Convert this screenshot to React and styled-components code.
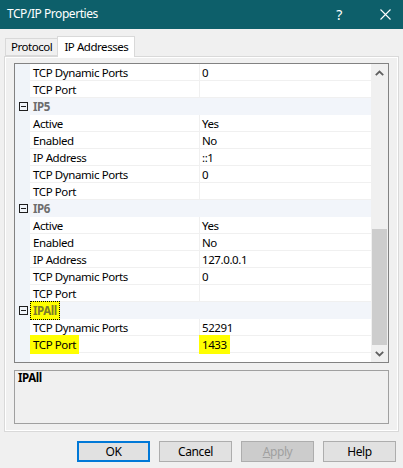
import React from 'react';
import styled, { createGlobalStyle } from 'styled-components';

const Global = createGlobalStyle`
  html, body {
    margin: 0;
    padding: 0;
    background: #f0f0f0;
  }
  body {
    font-family: "Segoe UI", "Noto Sans", "Liberation Sans", sans-serif;
    font-size: 11.5px;
    letter-spacing: -0.4px;
    color: #000;
  }
`;

const Window = styled.div`
  width: 403px;
  height: 468px;
  display: flex;
  flex-direction: column;
  background: #f0f0f0;
  overflow: hidden;
`;

const TitleBar = styled.div`
  height: 29px;
  background: #0d5f6a;
  display: flex;
  align-items: center;
  padding-left: 7px;
  color: #fff;
`;

const Title = styled.div`
  flex: 1;
  font-size: 12px;
  letter-spacing: -0.45px;
  margin-top: -2px;
`;

const TitleButton = styled.div`
  width: ${p => p.w}px;
  height: 29px;
  display: flex;
  align-items: center;
  justify-content: center;
  font-size: 14px;
`;

const Body = styled.div`
  padding: 7px 4px 0 4px;
  display: flex;
  flex-direction: column;
`;

const TabStrip = styled.div`
  display: flex;
  align-items: flex-end;
  height: 20px;
  padding-left: 1px;
`;

const Tab = styled.div`
  height: ${p => (p.active ? '20px' : '16px')};
  padding: ${p => (p.active ? '0 6px' : '0 5px')};
  margin-left: ${p => (p.active ? '-1px' : '0')};
  margin-bottom: ${p => (p.active ? '-1px' : '0')};
  border: 1px solid #d9d9d9;
  border-bottom: ${p => (p.active ? 'none' : '1px solid #d9d9d9')};
  background: ${p => (p.active ? '#ffffff' : '#f0f0f0')};
  display: flex;
  align-items: center;
  position: relative;
  z-index: ${p => (p.active ? 2 : 1)};
  line-height: 1;
  font-size: 11.5px;
  letter-spacing: -0.45px;
`;

const Panel = styled.div`
  border: 1px solid #d9d9d9;
  box-shadow: inset 0 0 0 1px #ffffff;
  background: #f0f0f0;
  height: 376px;
  box-sizing: border-box;
  padding: 6px 9px 0 9px;
  display: flex;
  flex-direction: column;
  gap: 7px;
`;

const Grid = styled.div`
  height: 300px;
  box-sizing: border-box;
  border: 1px solid #828282;
  background: #fff;
  display: flex;
`;

const Rows = styled.div`
  flex: 1;
  display: flex;
  flex-direction: column;
  background: linear-gradient(to right, #f0f4f9 15px, #ffffff 15px);
`;

const Row = styled.div`
  height: 17px;
  display: flex;
  flex-shrink: 0;
`;

const Gutter = styled.div`
  width: 15px;
  flex-shrink: 0;
  display: flex;
  align-items: center;
  justify-content: center;
`;

const Toggle = styled.div`
  width: 9px;
  height: 9px;
  box-sizing: border-box;
  border: 1px solid #1e1e1e;
  display: flex;
  align-items: center;
  justify-content: center;
  margin-left: 1px;
  &::after {
    content: '';
    width: 5px;
    height: 1px;
    background: #1e1e1e;
  }
`;

const NameCell = styled.div`
  width: 170px;
  flex-shrink: 0;
  box-sizing: border-box;
  border-bottom: 1px solid #f0f0f0;
  border-right: 1px solid #f0f0f0;
  padding-left: 3px;
  display: flex;
  align-items: center;
`;

const ValueCell = styled.div`
  flex: 1;
  box-sizing: border-box;
  border-bottom: 1px solid #f0f0f0;
  padding-left: 2px;
  display: flex;
  align-items: center;
`;

const CategoryCell = styled.div`
  flex: 1;
  background: #f2f5fa;
  padding-left: 3px;
  display: flex;
  align-items: center;
  font-weight: bold;
  color: #6d6d6d;
`;

const Mark = styled.span`
  background: ${p => (p.on ? '#ffff00' : 'transparent')};
  padding: ${p => (p.on ? '2px 3px' : '0')};
  margin-left: ${p => (p.on ? '-3px' : '0')};
  outline: ${p => (p.focus ? '1px dotted #000' : 'none')};
  outline-offset: -1px;
  color: ${p => (p.focus ? '#7a7a2a' : 'inherit')};
`;

const ScrollBar = styled.div`
  width: 17px;
  flex-shrink: 0;
  background: #f0f0f0;
  display: flex;
  flex-direction: column;
`;

const Arrow = styled.div`
  height: 17px;
  display: flex;
  align-items: center;
  justify-content: center;
`;

const Track = styled.div`
  flex: 1;
  display: flex;
  flex-direction: column;
  justify-content: flex-end;
`;

const Thumb = styled.div`
  height: 116px;
  width: 15px;
  margin-left: 1px;
  background: #cdcdcd;
`;

const Description = styled.div`
  height: 54px;
  box-sizing: border-box;
  border: 1px solid #a0a0a0;
  padding: 0 3px;
  line-height: 14px;
  font-weight: bold;
`;

const Buttons = styled.div`
  display: flex;
  justify-content: flex-end;
  gap: 9px;
  padding: 9px 3px 0 0;
`;

const Button = styled.div`
  width: 73px;
  height: 21px;
  box-sizing: border-box;
  border: ${p => (p.primary ? '2px solid #0078d7' : '1px solid #adadad')};
  background: ${p => (p.disabled ? '#cccccc' : '#e1e1e1')};
  color: ${p => (p.disabled ? '#a0a0a0' : '#000')};
  display: flex;
  align-items: center;
  justify-content: center;
  font-size: 12px;
  letter-spacing: -0.4px;
  & u {
    text-decoration: underline;
  }
`;

const Chevron = ({ up }) => (
  <svg width="9" height="6" viewBox="0 0 9 6">
    <path
      d={up ? 'M0.8 5.2 L4.5 1.5 L8.2 5.2' : 'M0.8 0.8 L4.5 4.5 L8.2 0.8'}
      fill="none"
      stroke="#606060"
      strokeWidth="1.8"
    />
  </svg>
);

const rows = [
  { name: 'TCP Dynamic Ports', value: '0' },
  { name: 'TCP Port', value: '' },
  { cat: 'IP5' },
  { name: 'Active', value: 'Yes' },
  { name: 'Enabled', value: 'No' },
  { name: 'IP Address', value: '::1' },
  { name: 'TCP Dynamic Ports', value: '0' },
  { name: 'TCP Port', value: '' },
  { cat: 'IP6' },
  { name: 'Active', value: 'Yes' },
  { name: 'Enabled', value: 'No' },
  { name: 'IP Address', value: '127.0.0.1' },
  { name: 'TCP Dynamic Ports', value: '0' },
  { name: 'TCP Port', value: '' },
  { cat: 'IPAll', focus: true },
  { name: 'TCP Dynamic Ports', value: '52291' },
  { name: 'TCP Port', value: '1433', mark: true },
];

export default function App() {
  return (
    <Window>
      <Global />
      <TitleBar>
        <Title>TCP/IP Properties</Title>
        <TitleButton w={56}>?</TitleButton>
        <TitleButton w={36}>
          <svg width="11" height="11" viewBox="0 0 11 11">
            <path d="M0.5 0.5 L10.5 10.5 M10.5 0.5 L0.5 10.5" stroke="#fff" strokeWidth="1.1" />
          </svg>
        </TitleButton>
      </TitleBar>
      <Body>
        <TabStrip>
          <Tab>Protocol</Tab>
          <Tab active>IP Addresses</Tab>
        </TabStrip>
        <Panel>
          <Grid>
            <Rows>
              {rows.map((r, i) =>
                r.cat ? (
                  <Row key={i}>
                    <Gutter><Toggle /></Gutter>
                    <CategoryCell>
                      <Mark on={r.focus} focus={r.focus}>{r.cat}</Mark>
                    </CategoryCell>
                  </Row>
                ) : (
                  <Row key={i}>
                    <Gutter />
                    <NameCell><Mark on={r.mark}>{r.name}</Mark></NameCell>
                    <ValueCell><Mark on={r.mark}>{r.value}</Mark></ValueCell>
                  </Row>
                )
              )}
            </Rows>
            <ScrollBar>
              <Arrow><Chevron up /></Arrow>
              <Track><Thumb /></Track>
              <Arrow><Chevron /></Arrow>
            </ScrollBar>
          </Grid>
          <Description>IPAll</Description>
        </Panel>
        <Buttons>
          <Button primary>OK</Button>
          <Button>Cancel</Button>
          <Button disabled><span><u>A</u>pply</span></Button>
          <Button>Help</Button>
        </Buttons>
      </Body>
    </Window>
  );
}
